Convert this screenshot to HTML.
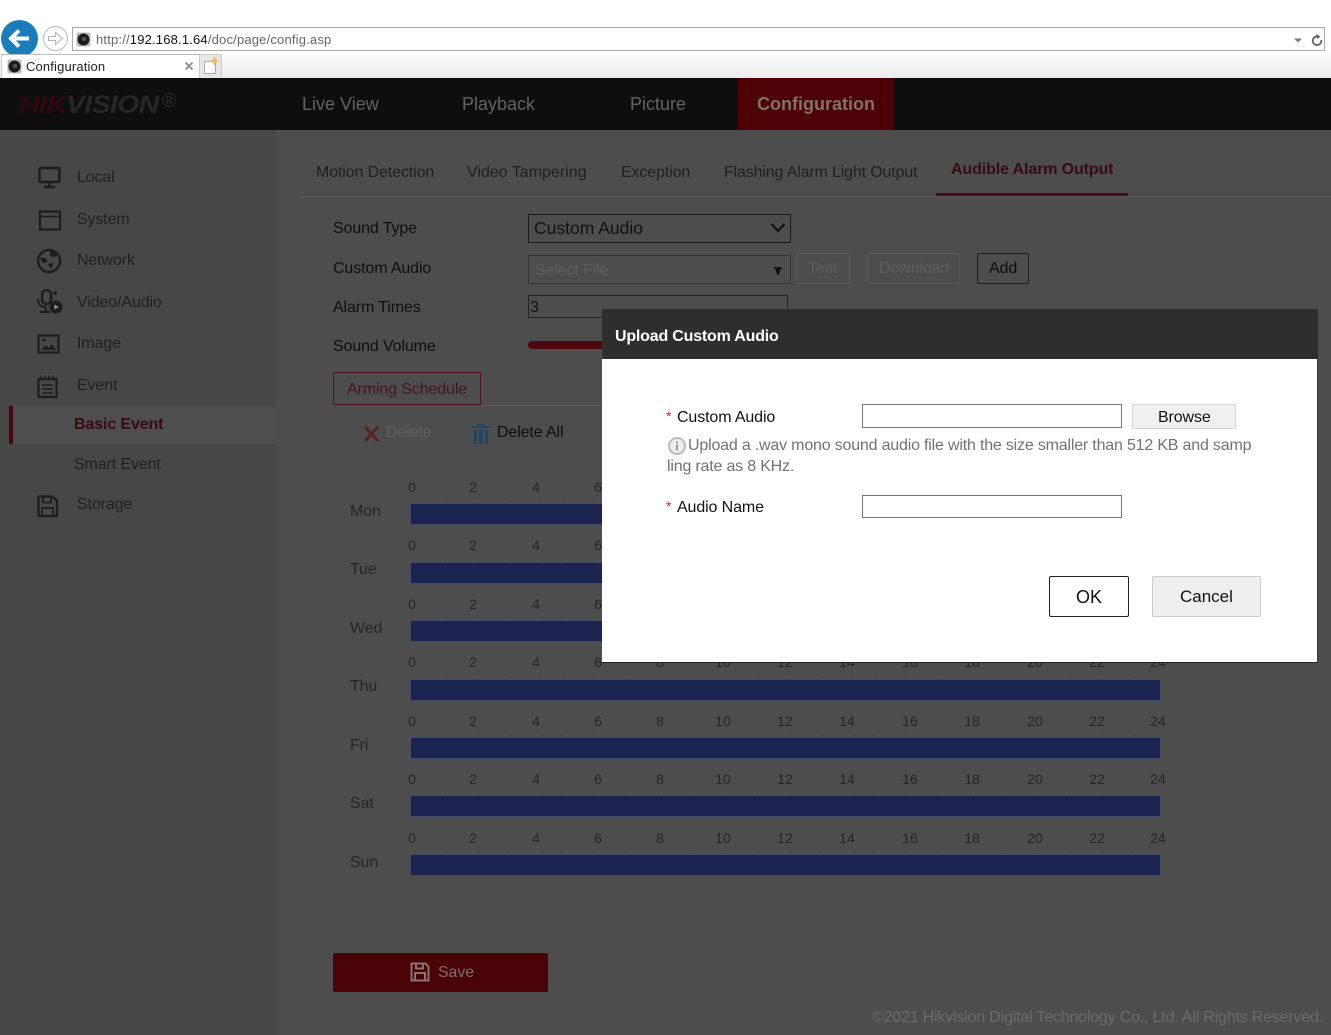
<!DOCTYPE html>
<html><head><meta charset="utf-8"><title>Configuration</title>
<style>
html,body{margin:0;padding:0}
body{width:1331px;height:1035px;position:relative;overflow:hidden;background:#4d4d4d;font-family:"Liberation Sans",sans-serif;font-size:16px;color:#1c1c1c;letter-spacing:-.12px}
.x{position:absolute;white-space:nowrap;line-height:20px}
.b{position:absolute;box-sizing:border-box}
svg{position:absolute;overflow:visible}
.nav{color:#626262;font-size:18px;line-height:22px;letter-spacing:0}
.tab{color:#202020;top:163px}
.side{color:#202020;left:77px}
.lab{left:333px;color:#0e0e0e}
.day{left:350px;color:#262626}
.bar{position:absolute;left:411px;width:749px;height:20px;background:#1b2450;box-shadow:0 0 0 1px #434c66}
.bar::before{content:"";position:absolute;left:0;right:0;top:-4px;height:3px;background:repeating-linear-gradient(90deg,#565656 0 1px,transparent 1px 31.2px)}
.r{position:absolute;left:0;width:1331px;height:20px;letter-spacing:0}
.r span{position:absolute;width:30px;text-align:center;font-size:14px;line-height:20px;color:#262626}
.t0{left:397px}.t1{left:458px}.t2{left:521px}.t3{left:583px}.t4{left:645px}.t5{left:708px}.t6{left:770px}.t7{left:832px}.t8{left:895px}.t9{left:957px}.t10{left:1020px}.t11{left:1082px}.t12{left:1143px}
.dl{color:#111}
.req{color:#c8202c}
</style></head><body>

<!-- browser chrome -->
<div class="b" style="left:0;top:0;width:1331px;height:54px;background:#fff"></div>
<div class="b" style="left:0;top:51px;width:1331px;height:27px;background:linear-gradient(#fff,#ececec)"></div>
<div class="b" style="left:72px;top:27px;width:1253px;height:24px;border:1px solid #aaa;background:#fff"></div>
<svg style="left:0;top:19px" width="70" height="38" viewBox="0 0 70 38">
<circle cx="19.500" cy="19.500" r="18.500" fill="#1a7dbb"/>
<path d="M11 19.500H29M19 11.500l-8 8 8 8" fill="none" stroke="#fff" stroke-width="4"/>
<circle cx="55.500" cy="19.500" r="12" fill="#fff" stroke="#bbb"/>
<path d="M48.500 17.500h7v-4l7 6-7 6v-4h-7z" fill="#fff" stroke="#b5b5b5"/>
</svg>
<svg style="left:76px;top:32px" width="15" height="15" viewBox="0 0 15 15"><rect x=".5" y=".5" width="14" height="14" rx="2" fill="#bbb"/><circle cx="7.500" cy="7.500" r="6" fill="#1c1c1c"/><circle cx="8" cy="7" r="2" fill="#555"/></svg>
<div class="x" style="left:96px;top:30px;font-size:13px;color:#666;letter-spacing:.18px">http://<span style="color:#111">192.168.1.64</span>/doc/page/config.asp</div>
<svg style="left:1293px;top:33px" width="30" height="14" viewBox="0 0 30 14">
<path d="M1 5.500h8l-4 4z" fill="#777"/>
<path d="M25.500 3.700a4.300 4.300 0 1 0 2.800 3.300" fill="none" stroke="#666" stroke-width="1.800"/><path d="M23 1l4.500 2.500L24 6z" fill="#666"/>
</svg>
<div class="b" style="left:1px;top:54px;width:198px;height:24px;background:#fff;border-top:1px solid #bbb;border-left:1px solid #ccc"></div>
<svg style="left:7px;top:59px" width="15" height="15" viewBox="0 0 15 15"><rect x=".5" y=".5" width="14" height="14" rx="2" fill="#bbb"/><circle cx="7.500" cy="7.500" r="6" fill="#1c1c1c"/><circle cx="8" cy="7" r="2" fill="#555"/></svg>
<div class="x" style="left:26px;top:57px;font-size:13px;color:#222;letter-spacing:.15px">Configuration</div>
<svg style="left:184px;top:61px" width="10" height="10" viewBox="0 0 10 10"><path d="M1.500 1.500l7 7M8.500 1.500l-7 7" stroke="#888" stroke-width="1.700"/></svg>
<div class="b" style="left:199px;top:54px;width:23px;height:24px;background:#e6e6e6;border:1px solid #ccc;border-bottom:0"></div>
<svg style="left:203px;top:56px" width="18" height="20" viewBox="0 0 18 20"><path d="M1.500 5.500h9l2 2v10h-11z" fill="#fff" stroke="#aaa"/><circle cx="11.500" cy="5" r="2.500" fill="#f0b040"/><path d="M11.500 0v10M7 5h9" stroke="#f0c070"/></svg>

<!-- app header -->
<div class="b" style="left:0;top:78px;width:1331px;height:52px;background:#0e0e0e"></div>
<div class="x" style="left:19px;top:91px;font-size:25px;line-height:28px;font-weight:bold;font-style:italic;letter-spacing:-.6px;color:#30070d;transform:scaleX(1.14);transform-origin:left center">HIK<span style="color:#262626">VISION</span></div>
<div class="x" style="left:162px;top:92px;font-size:19px;color:#2c2c2c;letter-spacing:0">®</div>
<div class="b" style="left:738px;top:78px;width:156px;height:52px;background:#4e0007"></div>
<div class="x nav" style="left:302px;top:93px">Live View</div>
<div class="x nav" style="left:462px;top:93px">Playback</div>
<div class="x nav" style="left:630px;top:93px">Picture</div>
<div class="x nav" style="left:757px;top:93px;font-weight:bold;color:#7e7269">Configuration</div>

<!-- sidebar -->
<div class="b" style="left:0;top:130px;width:277px;height:905px;background:#474747"></div>
<div class="b" style="left:9px;top:406px;width:268px;height:38px;background:#4e4e4e"></div>
<div class="b" style="left:9px;top:406px;width:4px;height:38px;background:#400814"></div>
<svg style="left:36px;top:165px" width="28" height="24" viewBox="0 0 28 24" fill="none" stroke="#1e1e1e" stroke-width="2.500"><rect x="3.500" y="3" width="20" height="14" rx="1"/><path d="M13.500 17v4M8 22h11"/></svg>
<svg style="left:36px;top:209px" width="28" height="24" viewBox="0 0 28 24" fill="none" stroke="#1e1e1e" stroke-width="2.200"><rect x="4" y="2.500" width="20" height="18"/><path d="M4 7.500h20" stroke-width="1.500"/></svg>
<svg style="left:36px;top:248px" width="28" height="26" viewBox="0 0 28 26"><circle cx="13" cy="13" r="11" fill="none" stroke="#1e1e1e" stroke-width="2.500"/><path d="M4 10c4-1 6 0 7 2s-2 3-3 3-3-2-4-5zM14 3c3 1 5 2 7 5-3 2-6 1-7-1zM12 16l6-1-3 6z" fill="#1e1e1e"/></svg>
<svg style="left:36px;top:288px" width="28" height="28" viewBox="0 0 28 28" fill="none" stroke="#1e1e1e" stroke-width="2"><rect x="6" y="2" width="9" height="14" rx="4.500" stroke-width="2.500"/><path d="M2 11c0 5 3 8 8 8M4 24h10M10 19v5"/><circle cx="19" cy="5" r="1" fill="#1e1e1e"/><circle cx="20" cy="19" r="5.500" fill="#1e1e1e"/><path d="M18.500 16.500l4 2.500-4 2.500z" fill="#999" stroke="none"/></svg>
<svg style="left:36px;top:333px" width="28" height="22" viewBox="0 0 28 22" fill="none" stroke="#1e1e1e" stroke-width="2.200"><rect x="2.500" y="2.500" width="20" height="17"/><path d="M5 17l5-5 3 3 3-4 4 6z" fill="#1e1e1e" stroke="none"/><circle cx="8" cy="7" r="1.500" fill="#1e1e1e" stroke="none"/></svg>
<svg style="left:36px;top:375px" width="28" height="24" viewBox="0 0 28 24" fill="none" stroke="#1e1e1e" stroke-width="2.200"><rect x="2.500" y="4" width="18" height="18"/><path d="M5 .5v5M9 .5v5M13 .5v5M17 .5v5M6 10h11M6 14h11M6 18h11" stroke-width="1.500"/></svg>
<svg style="left:36px;top:495px" width="28" height="24" viewBox="0 0 28 24" fill="none" stroke="#1e1e1e" stroke-width="2.200"><path d="M2.500 1.500h14l4.500 4v15.500h-18.500z"/><path d="M7 1.500v6h8v-6M6 20v-7h11v7" stroke-width="1.800"/></svg>
<div class="x side" style="top:168px">Local</div>
<div class="x side" style="top:210px">System</div>
<div class="x side" style="top:251px">Network</div>
<div class="x side" style="top:293px">Video/Audio</div>
<div class="x side" style="top:334px">Image</div>
<div class="x side" style="top:376px">Event</div>
<div class="x" style="left:74px;top:415px;font-weight:bold;color:#380a14">Basic Event</div>
<div class="x" style="left:74px;top:455px;color:#202020">Smart Event</div>
<div class="x side" style="top:495px">Storage</div>

<!-- tabs -->
<div class="b" style="left:301px;top:196px;width:1030px;height:1px;background:#5c5c5c"></div>
<div class="x tab" style="left:316px">Motion Detection</div>
<div class="x tab" style="left:467px;letter-spacing:0">Video Tampering</div>
<div class="x tab" style="left:621px">Exception</div>
<div class="x tab" style="left:724px;letter-spacing:-.15px">Flashing Alarm Light Output</div>
<div class="x" style="left:951px;top:160px;font-weight:bold;color:#380a14">Audible Alarm Output</div>
<div class="b" style="left:936px;top:193px;width:192px;height:3px;background:#480a18"></div>

<!-- form -->
<div class="x lab" style="top:219px">Sound Type</div>
<div class="x lab" style="top:259px">Custom Audio</div>
<div class="x lab" style="top:298px">Alarm Times</div>
<div class="x lab" style="top:337px">Sound Volume</div>
<div class="b" style="left:528px;top:214px;width:263px;height:29px;border:1px solid #1a1a1a"></div>
<div class="x" style="left:534px;top:218px;font-size:17.500px;letter-spacing:0;color:#111">Custom Audio</div>
<svg style="left:770px;top:222px" width="16" height="12" viewBox="0 0 16 12"><path d="M1.500 2l6.500 7 6.500-7" fill="none" stroke="#111" stroke-width="2.200"/></svg>
<div class="b" style="left:528px;top:255px;width:263px;height:29px;border:1px solid #333"></div>
<div class="x" style="left:535px;top:261px;color:#5e5e5e">Select File</div>
<svg style="left:773px;top:266px" width="10" height="10" viewBox="0 0 10 10"><path d="M1 1h8l-4 9z" fill="#111"/></svg>
<div class="b" style="left:796px;top:253px;width:54px;height:31px;border:1px solid #5a5a5a;border-radius:2px"></div>
<div class="x" style="left:808px;top:259px;color:#5e5e5e">Test</div>
<div class="b" style="left:867px;top:253px;width:93px;height:31px;border:1px solid #5a5a5a;border-radius:2px"></div>
<div class="x" style="left:879px;top:259px;color:#5e5e5e">Download</div>
<div class="b" style="left:977px;top:253px;width:52px;height:31px;border:1.500px solid #1e1e1e;border-radius:2px"></div>
<div class="x" style="left:989px;top:259px;color:#0c0c0c">Add</div>
<div class="b" style="left:528px;top:295px;width:260px;height:23px;border:1px solid #222"></div>
<div class="x" style="left:530px;top:298px;color:#111">3</div>
<div class="b" style="left:528px;top:341px;width:80px;height:8px;border-radius:4px;background:#4e070e"></div>

<div class="b" style="left:333px;top:372px;width:148px;height:33px;border:1px solid #50131c"></div>
<div class="x" style="left:347px;top:380px;color:#431620">Arming Schedule</div>
<div class="b" style="left:481px;top:405px;width:130px;height:1px;background:#5a5a5a"></div>
<svg style="left:363px;top:425px" width="18" height="18" viewBox="0 0 18 18"><path d="M2 2l13 14M15 2L2 16" stroke="#5a2024" stroke-width="3"/></svg>
<div class="x" style="left:386px;top:423px;color:#606060">Delete</div>
<svg style="left:471px;top:423px" width="20" height="22" viewBox="0 0 20 22" fill="#204664"><rect x="1" y="3" width="18" height="2"/><rect x="6" y="1" width="8" height="2"/><path d="M3 7h3v14H3zM8 7h4v14H8zM14 7h3v14h-3z"/></svg>
<div class="x" style="left:497px;top:423px;color:#0e0e0e">Delete All</div>

<!-- schedule -->
<div class="x day" style="top:502px">Mon</div>
<div class="x day" style="top:560px">Tue</div>
<div class="x day" style="top:619px">Wed</div>
<div class="x day" style="top:677px">Thu</div>
<div class="x day" style="top:736px">Fri</div>
<div class="x day" style="top:794px">Sat</div>
<div class="x day" style="top:853px">Sun</div>

<div class="r" style="top:477px"><span class="t0">0</span><span class="t1">2</span><span class="t2">4</span><span class="t3">6</span></div>
<div class="r" style="top:535px"><span class="t0">0</span><span class="t1">2</span><span class="t2">4</span><span class="t3">6</span></div>
<div class="r" style="top:594px"><span class="t0">0</span><span class="t1">2</span><span class="t2">4</span><span class="t3">6</span></div>
<div class="r" style="top:652px"><span class="t0">0</span><span class="t1">2</span><span class="t2">4</span><span class="t3">6</span><span class="t4">8</span><span class="t5">10</span><span class="t6">12</span><span class="t7">14</span><span class="t8">16</span><span class="t9">18</span><span class="t10">20</span><span class="t11">22</span><span class="t12">24</span></div>
<div class="r" style="top:711px"><span class="t0">0</span><span class="t1">2</span><span class="t2">4</span><span class="t3">6</span><span class="t4">8</span><span class="t5">10</span><span class="t6">12</span><span class="t7">14</span><span class="t8">16</span><span class="t9">18</span><span class="t10">20</span><span class="t11">22</span><span class="t12">24</span></div>
<div class="r" style="top:769px"><span class="t0">0</span><span class="t1">2</span><span class="t2">4</span><span class="t3">6</span><span class="t4">8</span><span class="t5">10</span><span class="t6">12</span><span class="t7">14</span><span class="t8">16</span><span class="t9">18</span><span class="t10">20</span><span class="t11">22</span><span class="t12">24</span></div>
<div class="r" style="top:828px"><span class="t0">0</span><span class="t1">2</span><span class="t2">4</span><span class="t3">6</span><span class="t4">8</span><span class="t5">10</span><span class="t6">12</span><span class="t7">14</span><span class="t8">16</span><span class="t9">18</span><span class="t10">20</span><span class="t11">22</span><span class="t12">24</span></div>

<div class="bar" style="top:504px"></div>
<div class="bar" style="top:563px"></div>
<div class="bar" style="top:621px"></div>
<div class="bar" style="top:680px"></div>
<div class="bar" style="top:738px"></div>
<div class="bar" style="top:796px"></div>
<div class="bar" style="top:855px"></div>

<!-- save + footer -->
<div class="b" style="left:333px;top:953px;width:215px;height:39px;background:#490307;border-radius:2px"></div>
<svg style="left:410px;top:962px" width="20" height="20" viewBox="0 0 20 20" fill="none" stroke="#8c7272" stroke-width="2"><path d="M1.500 1.500h14l3 3v14h-17z"/><path d="M6 1.500v5h7v-5M5 18v-7h10v7"/></svg>
<div class="x" style="left:438px;top:963px;color:#866a6a">Save</div>
<div class="x" style="right:8px;top:1008px;color:#6c6c6c;letter-spacing:-.19px">©2021 Hikvision Digital Technology Co., Ltd. All Rights Reserved.</div>

<!-- dialog -->
<div class="b" style="left:602px;top:309px;width:716px;height:354px;background:#fff;border-bottom:1px solid #222;border-right:1px solid #3a3a3a"></div>
<div class="b" style="left:602px;top:309px;width:716px;height:50px;background:#2e2e2e"></div>
<div class="x" style="left:615px;top:327px;font-weight:bold;color:#fff;letter-spacing:-.2px">Upload Custom Audio</div>

<div class="x req" style="left:666px;top:406px;font-size:14px">*</div>
<div class="x dl" style="left:677px;top:408px">Custom Audio</div>
<div class="b" style="left:862px;top:404px;width:260px;height:24px;border:1px solid #777"></div>
<div class="b" style="left:1132px;top:404px;width:104px;height:25px;background:#f0f0f0;border:1px solid #d4d4d4;border-radius:2px"></div>
<div class="x dl" style="left:1158px;top:408px">Browse</div>
<svg style="left:667px;top:436px" width="20" height="20" viewBox="0 0 20 20"><circle cx="10" cy="10" r="8" fill="#eee" stroke="#bbb" stroke-width="2"/><path d="M10 8.500v6M10 5.500v1.800" stroke="#999" stroke-width="2"/></svg>
<div class="x" style="left:688px;top:436px;color:#727272;letter-spacing:-.19px">Upload a .wav mono sound audio file with the size smaller than 512 KB and samp</div>
<div class="x" style="left:667px;top:457px;color:#727272;letter-spacing:-.19px">ling rate as 8 KHz.</div>
<div class="x req" style="left:666px;top:496px;font-size:14px">*</div>
<div class="x dl" style="left:677px;top:498px">Audio Name</div>
<div class="b" style="left:862px;top:495px;width:260px;height:23px;border:1px solid #777"></div>
<div class="b" style="left:1049px;top:576px;width:80px;height:41px;border:1px solid #222;border-radius:2px;background:#fff"></div>
<div class="x dl" style="left:1076px;top:587px;font-size:18px;letter-spacing:0">OK</div>
<div class="b" style="left:1152px;top:576px;width:109px;height:41px;background:#efefef;border:1px solid #ccc;border-radius:2px"></div>
<div class="x dl" style="left:1180px;top:587px;font-size:17px;letter-spacing:0">Cancel</div>
</body></html>
